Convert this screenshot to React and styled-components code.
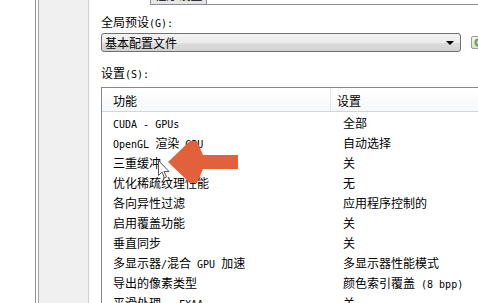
import styled, { createGlobalStyle } from "styled-components";

const GlobalStyle = createGlobalStyle`
  html, body {
    margin: 0;
    padding: 0;
    background: #ffffff;
    overflow: hidden;
  }
  body {
    font-family: "Noto Sans CJK SC", sans-serif;
    font-size: 12px;
    color: #000000;
  }
`;

const Frame = styled.div`
  position: relative;
  display: flex;
  width: 478px;
  height: 303px;
  overflow: hidden;
`;

const Gutter = styled.div`
  flex: none;
  width: 35px;
  border-right: 1px solid #8e8e8e;
`;

const SidePanel = styled.div`
  flex: none;
  width: 49px;
  margin-left: 2px;
  border-left: 1px solid #a3a3a3;
  border-right: 1px solid #cfcfcf;
  background: #f0f0f0;
`;

const Page = styled.div`
  flex: 1;
  min-width: 0;
  display: flex;
  flex-direction: column;
`;

const TabStrip = styled.div`
  flex: none;
  display: flex;
  align-items: flex-end;
  height: 5px;
  overflow: hidden;
`;

const Tab = styled.div`
  flex: none;
  box-sizing: border-box;
  width: ${(p) => p.$width}px;
  height: 20px;
  line-height: 17px;
  text-align: center;
  color: #000;
  border: ${(p) => (p.$active ? "none" : "1px solid #8c8e94")};
  background: ${(p) =>
    p.$active ? "#ffffff" : "linear-gradient(#f2f2f2, #e3e3e3)"};
`;

const TabFiller = styled.div`
  flex: 1;
  height: 5px;
  box-sizing: border-box;
  border-bottom: 1px solid #8c8e94;
`;

const Body = styled.div`
  flex: none;
  display: flex;
  flex-direction: column;
  padding-left: 12px;
`;

const Label = styled.div`
  flex: none;
  height: 16px;
  line-height: 16px;
  margin-top: ${(p) => p.$top}px;
  white-space: nowrap;
`;

const PresetRow = styled.div`
  flex: none;
  display: flex;
  align-items: center;
  gap: 10px;
  margin-top: 3px;
`;

const Select = styled.div`
  flex: none;
  box-sizing: border-box;
  width: 360px;
  height: 19px;
  display: flex;
  align-items: center;
  justify-content: space-between;
  padding: 0 6px 0 3px;
  border: 1px solid #707070;
  border-radius: 3px;
  background: linear-gradient(#f3f3f3 0%, #ebebeb 50%, #dedede 51%, #d2d2d2 100%);
  line-height: 16px;
`;

const Caret = styled.span`
  width: 0;
  height: 0;
  border-left: 4px solid transparent;
  border-right: 4px solid transparent;
  border-top: 4px solid #000;
  margin-top: 1px;
`;

const IconButton = styled.div`
  flex: none;
  box-sizing: border-box;
  width: 22px;
  height: 13px;
  padding-left: 2px;
  display: flex;
  align-items: center;
  border: 1px solid #9a9a9a;
  border-radius: 2px;
  background: linear-gradient(#f6f6f6, #dcdcdc);
`;

const ListBox = styled.div`
  flex: none;
  margin-top: 6px;
  margin-right: -20px;
  border: 1px solid #828790;
  border-right: none;
  background: #fff;
`;

const Header = styled.div`
  display: grid;
  grid-template-columns: 229px 1fr;
  height: 23px;
  border-bottom: 1px solid #d5d5d5;
  background: linear-gradient(#ffffff, #f7f8f9);
`;

const HeaderCell = styled.div`
  box-sizing: border-box;
  padding: 5px 0 0 ${(p) => p.$pad}px;
  line-height: 16px;
  border-right: ${(p) => (p.$divider ? "1px solid #e3e5e8" : "none")};
`;

const Rows = styled.div`
  padding-top: 1px;
`;

const Row = styled.div`
  display: grid;
  grid-template-columns: 229px 1fr;
  height: 20px;
  line-height: 20px;
  white-space: nowrap;
`;

const Cell = styled.div`
  padding-left: ${(p) => p.$pad}px;
`;

const Latin = styled.span`
  font-family: "DejaVu Sans Mono", monospace;
  font-size: 10px;
`;

const Overlay = styled.svg`
  position: absolute;
  left: ${(p) => p.$x}px;
  top: ${(p) => p.$y}px;
`;

const runs = (text) =>
  text
    .split(/([\u0000-\u02ff]+)/)
    .filter(Boolean)
    .map((part, i) =>
      /^[\u0000-\u02ff]+$/.test(part) ? <Latin key={i}>{part}</Latin> : part
    );

const settings = [
  ["CUDA - GPUs", "全部"],
  ["OpenGL 渲染 GPU", "自动选择"],
  ["三重缓冲", "关"],
  ["优化稀疏纹理性能", "无"],
  ["各向异性过滤", "应用程序控制的"],
  ["启用覆盖功能", "关"],
  ["垂直同步", "关"],
  ["多显示器/混合 GPU 加速", "多显示器性能模式"],
  ["导出的像素类型", "颜色索引覆盖 (8 bpp)"],
  ["平滑处理 - FXAA", "关"],
];

const App = () => {
  return (
    <>
      <GlobalStyle />
      <Frame>
        <Gutter />
        <SidePanel />
        <Page>
          <TabStrip>
            <Tab $active $width={61}>全局设置</Tab>
            <Tab $width={57}>程序设置</Tab>
            <TabFiller />
          </TabStrip>
          <Body>
            <Label $top={9}>全局预设{runs("(G):")}</Label>
            <PresetRow>
              <Select>
                <span>基本配置文件</span>
                <Caret />
              </Select>
              <IconButton>
                <svg width="9" height="9" viewBox="0 0 9 9">
                  <circle cx="4.5" cy="4.5" r="4" fill="#5fae2e" />
                  <circle cx="4.5" cy="4.5" r="2" fill="#b9e58f" />
                </svg>
              </IconButton>
            </PresetRow>
            <Label $top={13}>设置{runs("(S):")}</Label>
            <ListBox>
              <Header>
                <HeaderCell $pad={11} $divider>功能</HeaderCell>
                <HeaderCell $pad={6}>设置</HeaderCell>
              </Header>
              <Rows>
                {settings.map(([name, value]) => (
                  <Row key={name}>
                    <Cell $pad={11}>{runs(name)}</Cell>
                    <Cell $pad={12}>{runs(value)}</Cell>
                  </Row>
                ))}
              </Rows>
            </ListBox>
          </Body>
        </Page>

        <Overlay $x={166} $y={140} width="76" height="46" viewBox="0 0 76 46">
          <polygon
            points="2,22 24,1 31,1 37,15 72,15 72,29 37,29 31,43 24,43"
            fill="#e2603a"
          />
        </Overlay>
        <Overlay $x={158} $y={160} width="13" height="20" viewBox="0 0 13 20">
          <path
            d="M0.5 0.5 L0.5 15.5 L4 12 L6.5 18 L8.5 17 L6 11.5 L11 11.5 Z"
            fill="#ffffff"
            stroke="#555"
            strokeWidth="1"
          />
        </Overlay>
      </Frame>
    </>
  );
};

export default App;
